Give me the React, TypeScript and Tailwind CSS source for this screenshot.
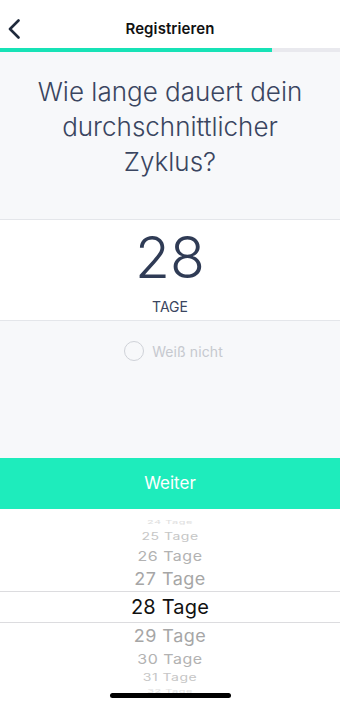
import React from "react";

type R = { label: string; h: number; size: number; color: string; scale: number };

const rows: R[] = [
  { label: "24 Tage", h: 11, size: 11, color: "#dedede", scale: 0.45 },
  { label: "25 Tage", h: 17, size: 14, color: "#c6c6c6", scale: 0.7 },
  { label: "26 Tage", h: 21, size: 16, color: "#b2b2b2", scale: 0.85 },
  { label: "27 Tage", h: 25, size: 18, color: "#a6a6a6", scale: 0.95 },
];
const rowsBelow: R[] = [
  { label: "29 Tage", h: 25, size: 18, color: "#a6a6a6", scale: 0.95 },
  { label: "30 Tage", h: 21, size: 16, color: "#b2b2b2", scale: 0.85 },
  { label: "31 Tage", h: 17, size: 14, color: "#c6c6c6", scale: 0.7 },
  { label: "32 Tage", h: 11, size: 11, color: "#e2e2e2", scale: 0.45 },
];

function Row({ r }: { r: R }) {
  return (
    <div className="flex items-center justify-center overflow-hidden shrink-0" style={{ height: r.h }}>
      <span
        className="leading-none tracking-[0.5px]"
        style={{ fontSize: r.size, color: r.color, transform: `scaleY(${r.scale})` }}
      >
        {r.label}
      </span>
    </div>
  );
}

export default function App() {
  return (
    <div className="w-[340px] h-[705px] overflow-hidden flex flex-col bg-white font-['Inter','Noto_Sans',sans-serif]">
      {/* Header */}
      <div className="shrink-0 h-[48px] pt-[10px] grid grid-cols-[48px_1fr_48px] items-center bg-white">
        <div className="pl-[8px] flex items-center">
          <svg width="12" height="20" viewBox="0 0 12 20" fill="none">
            <path d="M10.5 1.5 L2 10 L10.5 18.5" stroke="#1f2a3c" strokeWidth="2.6" strokeLinecap="round" strokeLinejoin="round" />
          </svg>
        </div>
        <div className="text-center text-[15px] font-semibold text-[#111] tracking-[0.1px]">Registrieren</div>
        <div />
      </div>
      {/* Progress */}
      <div className="shrink-0 h-[4px] bg-[#e9e9ee] flex">
        <div className="w-[272px] h-full bg-[#17e2b6]" />
      </div>
      {/* Question */}
      <div className="shrink-0 h-[168px] bg-[#f7f8fa] pt-[22px] border-b border-[#e4e6ea]">
        <p className="text-center text-[26px] leading-[35px] font-light text-[#3a4560] px-4">
          Wie lange dauert dein
          <br />
          durchschnittlicher
          <br />
          Zyklus?
        </p>
      </div>
      {/* Number */}
      <div className="shrink-0 h-[101px] bg-white border-b border-[#e4e6ea] flex flex-col items-center pt-[6px]">
        <div className="text-[57px] leading-[64px] font-light text-[#2f3b55]">28</div>
        <div className="mt-[8px] text-[14px] leading-[18px] text-[#3a4560]">TAGE</div>
      </div>
      {/* Don't know */}
      <div className="shrink-0 h-[137px] bg-[#f7f8fa] pt-[19px] pl-[7px] flex justify-center">
        <div className="flex items-center gap-[8px] h-[22px]">
          <div className="w-[20px] h-[20px] rounded-full border border-[#cfd2d8]" />
          <span className="text-[14px] text-[#c6c9cf] tracking-[0.1px]">Weiß nicht</span>
        </div>
      </div>
      {/* Button */}
      <div className="shrink-0 h-[51px] bg-[#1eecbc] flex items-center justify-center">
        <span className="text-[17px] text-white">Weiter</span>
      </div>
      {/* Picker */}
      <div className="relative flex-1 min-h-0 overflow-hidden bg-white flex flex-col pt-[8px]">
        {rows.map((r) => (
          <Row key={r.label} r={r} />
        ))}
        <div className="shrink-0 h-[32px] border-y border-[#dcdcdf] flex items-center justify-center">
          <span className="text-[20px] leading-none text-[#111] tracking-[0.2px]">28 Tage</span>
        </div>
        {rowsBelow.map((r) => (
          <Row key={r.label} r={r} />
        ))}
        <div className="absolute left-[110px] bottom-[7px] w-[121px] h-[5px] rounded-full bg-black" />
      </div>
    </div>
  );
}
